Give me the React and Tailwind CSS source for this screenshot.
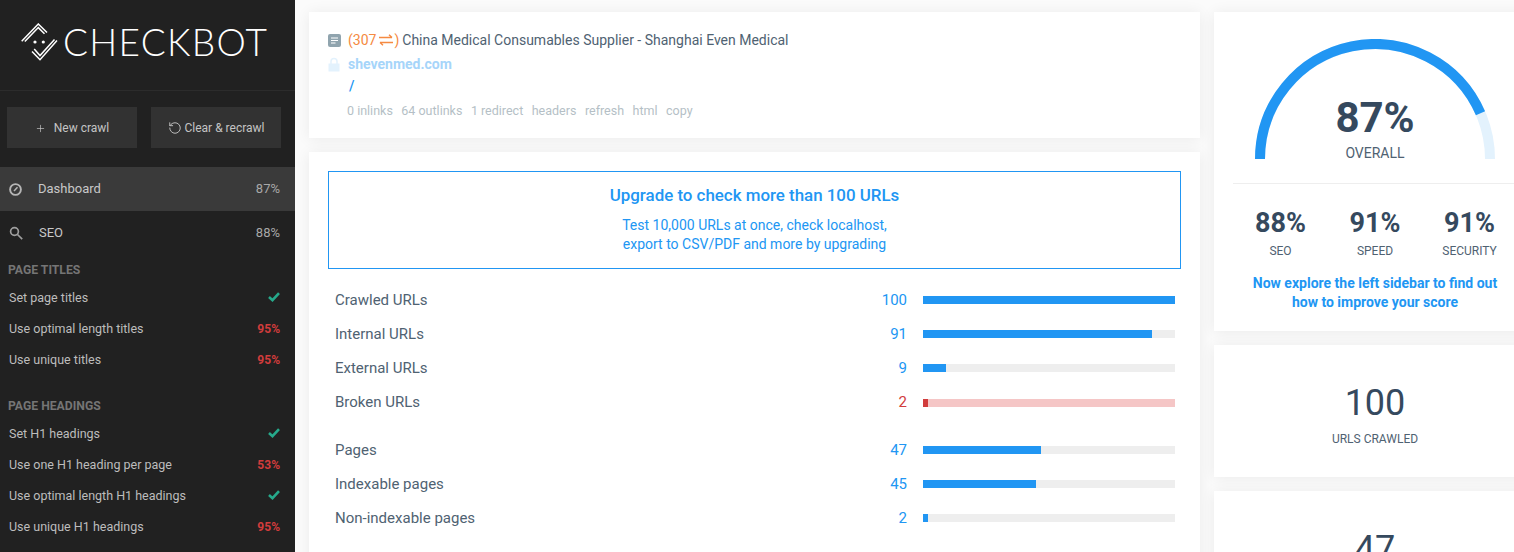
import { Plus, RotateCcw } from 'lucide-react'

const font = { fontFamily: 'Roboto, sans-serif' }

const titleItems = [
  ['Set page titles', null],
  ['Use optimal length titles', '95%'],
  ['Use unique titles', '95%'],
]

const headingItems = [
  ['Set H1 headings', null],
  ['Use one H1 heading per page', '53%'],
  ['Use optimal length H1 headings', null],
  ['Use unique H1 headings', '95%'],
]

const barsTop = [
  ['Crawled URLs', 100, 100],
  ['Internal URLs', 91, 91],
  ['External URLs', 9, 9],
  ['Broken URLs', 2, 2, true],
]

const barsBottom = [
  ['Pages', 47, 47],
  ['Indexable pages', 45, 45],
  ['Non-indexable pages', 2, 2],
]

function Logo() {
  return (
    <svg width="37" height="38" viewBox="0 0 37 38" fill="none" stroke="#fff" strokeWidth="1.5" className="shrink-0">
      <path d="M0.7 18.3 L17.3 1 L26 9.5" />
      <path d="M3.8 18.6 L17.3 4.6 L23.5 10.8" />
      <path d="M11 28.5 L19 36.7 L36 17.5" />
      <path d="M13.2 26 L19 32.6 L33.5 16.5" />
      <circle cx="14" cy="19" r="1.6" fill="#fff" stroke="none" />
      <circle cx="22.3" cy="19" r="1.6" fill="#fff" stroke="none" />
    </svg>
  )
}

function Check() {
  return (
    <svg width="12" height="10" viewBox="0 0 12 10" fill="none" stroke="#26a98b" strokeWidth="2.6" className="mb-[3px]">
      <path d="M1 5 L4.5 8.2 L11 1.2" />
    </svg>
  )
}

function SideItem({ label, value }) {
  return (
    <div className="flex items-center justify-between h-[31px] pl-[9px] pr-[15px] text-[12.5px] text-[#bdbdbd]">
      <span>{label}</span>
      {value ? <span className="mb-[2px] font-bold text-[12px] text-[#d13c3c]">{value}</span> : <Check />}
    </div>
  )
}

function Sidebar() {
  return (
    <aside className="w-[295px] shrink-0 bg-[#212121] h-[552px] overflow-hidden">
      <div className="h-[91px] border-b border-[#2c2c2c] flex items-start pl-[21px] pt-[23px] gap-[5px]">
        <Logo />
        <span className="text-[37px] leading-[38px] font-light text-white tracking-[1.3px]" style={{ fontFamily: 'Lato, sans-serif' }}>CHECKBOT</span>
      </div>
      <div className="flex gap-[14px] pl-[7px] pt-[16px]">
        <button className="w-[130px] h-[41px] pt-px bg-[#323232] text-[#c4c4c4] text-[12px] flex items-center justify-center gap-[8px]">
          <Plus size={11} strokeWidth={1.5} />
          New crawl
        </button>
        <button className="w-[130px] h-[41px] pt-px bg-[#323232] text-[#c4c4c4] text-[12px] flex items-center justify-center gap-[3px]">
          <RotateCcw size={14} strokeWidth={1.6} />
          Clear &amp; recrawl
        </button>
      </div>
      <div className="mt-[19px] h-[44px] bg-[#3a3a3a] flex items-center justify-between pl-[9px] pr-[15px] text-[13px] text-[#c8c8c8]">
        <span className="flex items-center gap-[16px]">
          <svg width="13" height="13" viewBox="0 0 13 13" fill="none" stroke="#b5b5b5" strokeWidth="1.9">
            <circle cx="6.5" cy="6.5" r="5.4" />
            <path d="M5 8 L8.5 4.2" strokeWidth="1.5" />
          </svg>
          Dashboard
        </span>
        <span className="text-[#a8a8a8]">87%</span>
      </div>
      <div className="h-[43px] flex items-center justify-between pl-[9px] pr-[15px] text-[13px] text-[#c8c8c8]">
        <span className="flex items-center gap-[16px]">
          <svg width="14" height="14" viewBox="0 0 14 14" fill="none" stroke="#9e9e9e" strokeWidth="1.7">
            <circle cx="5.5" cy="5.5" r="3.9" />
            <path d="M8.5 8.5 L13.2 13.2" />
          </svg>
          SEO
        </span>
        <span className="text-[#a8a8a8]">88%</span>
      </div>
      <div className="pl-[8px] text-[12.2px] font-bold text-[#757575] h-[15px] leading-[15px] mt-[9px]">PAGE TITLES</div>
      <div className="mt-[5px]">
        {titleItems.map(([label, value]) => (
          <SideItem key={label} label={label} value={value} />
        ))}
      </div>
      <div className="pl-[8px] text-[12.2px] font-bold text-[#757575] h-[15px] leading-[15px] mt-[23px]">PAGE HEADINGS</div>
      <div className="mt-[5px]">
        {headingItems.map(([label, value]) => (
          <SideItem key={label} label={label} value={value} />
        ))}
      </div>
    </aside>
  )
}

function Bar({ label, count, pct, danger }) {
  return (
    <div className="flex items-center h-[34.2px]">
      <span className="w-[500px] text-[15px] text-[#4f6272]">{label}</span>
      <span className={`w-[72px] text-right text-[15px] ${danger ? 'text-[#d13c3c]' : 'text-[#2196f3]'}`}>{count}</span>
      <div className={`ml-[16px] w-[252px] h-[8px] ${danger ? 'bg-[#f5c6c6]' : 'bg-[#eeeeee]'}`}>
        <div className={`h-full ${danger ? 'bg-[#d13c3c]' : 'bg-[#2196f3]'}`} style={{ width: `${pct}%` }} />
      </div>
    </div>
  )
}

function PageCard() {
  return (
    <div className="bg-white h-[126px] pt-[17px] pl-[19px] shadow-[0_1px_14px_rgba(0,0,0,0.07)]">
      <div className="flex items-center h-[22px] text-[14px] text-[#4f6272]">
        <svg width="13" height="13" viewBox="0 0 13 13" className="mr-[7px]">
          <rect width="13" height="13" rx="2" fill="#90a4ae" />
          <path d="M3 4 H10 M3 6.5 H10 M3 9 H7.5" stroke="#fff" strokeWidth="1.2" />
        </svg>
        <span className="text-[#f58a42] mr-[3px] flex items-center">
          (307
          <svg width="14" height="12" viewBox="0 0 14 12" fill="none" stroke="#f58a42" strokeWidth="1.4" className="ml-[3px] mr-[1px]">
            <path d="M0 3.5 H13 M10 0.8 L13 3.5" />
            <path d="M14 8.5 H1 M4 11.2 L1 8.5" />
          </svg>
          )
        </span>
        China Medical Consumables Supplier - Shanghai Even Medical
      </div>
      <div className="flex items-center h-[26px] text-[14px] font-bold text-[#a6d5fa]">
        <svg width="12" height="15" viewBox="0 0 12 15" className="mr-[8px]">
          <path d="M3 7 V4.5 a3 3 0 0 1 6 0 V7" fill="none" stroke="#e3f2fd" strokeWidth="1.5" />
          <rect x="0.5" y="6.5" width="11" height="8" fill="#e3f2fd" />
        </svg>
        shevenmed.com
      </div>
      <div className="pl-[21px] h-[19px] text-[14px] font-medium leading-[19px] text-[#2196f3]">/</div>
      <div className="pl-[19px] mt-[6px] flex gap-[8.5px] text-[12.5px] text-[#b5bfc6]">
        <span>0 inlinks</span>
        <span>64 outlinks</span>
        <span>1 redirect</span>
        <span>headers</span>
        <span>refresh</span>
        <span>html</span>
        <span>copy</span>
      </div>
    </div>
  )
}

function StatsCard() {
  return (
    <div className="mt-[14px] bg-white h-[420px] pt-[19px] px-[19px] shadow-[0_1px_14px_rgba(0,0,0,0.07)]">
      <div className="h-[98px] border border-[#2196f3] flex flex-col items-center text-[#2196f3]">
        <div className="mt-[12px] text-[16.9px] font-medium leading-[22px]">Upgrade to check more than 100 URLs</div>
        <div className="mt-[10px] text-[14px] leading-[19px] text-center">
          Test 10,000 URLs at once, check localhost,
          <br />
          export to CSV/PDF and more by upgrading
        </div>
      </div>
      <div className="pl-[7px] mt-[14px]">
        {barsTop.map(([label, count, pct, danger]) => (
          <Bar key={label} label={label} count={count} pct={pct} danger={danger} />
        ))}
        <div className="h-[13px]" />
        {barsBottom.map(([label, count, pct]) => (
          <Bar key={label} label={label} count={count} pct={pct} />
        ))}
      </div>
    </div>
  )
}

function Gauge() {
  return (
    <svg width="240" height="120" viewBox="0 0 240 120" fill="none" strokeWidth="10" className="block">
      <path d="M5 120 A115 115 0 0 1 235 120" stroke="#e3f2fd" />
      <path d="M5 120 A115 115 0 0 1 225.5 74.3" stroke="#2196f3" />
    </svg>
  )
}

function Score({ value, label }) {
  return (
    <div className="w-[94.5px] flex flex-col items-center">
      <span className="text-[27px] leading-[30px] font-bold text-[#35495e]">{value}</span>
      <span className="mt-[6px] text-[12px] leading-[14px] text-[#4f6272]">{label}</span>
    </div>
  )
}

function ScoreCard() {
  return (
    <div className="bg-white h-[319px] pt-[27px] shadow-[0_1px_14px_rgba(0,0,0,0.07)] relative">
      <div className="flex justify-center">
        <Gauge />
      </div>
      <div className="absolute left-0 right-0 top-[82px] text-center">
        <div className="text-[42px] leading-[48px] font-bold text-[#35495e]">87%</div>
        <div className="mt-[2px] text-[14px] leading-[18px] text-[#4f6272]">OVERALL</div>
      </div>
      <div className="ml-[19px] mt-[24px] border-t border-[#eeeeee]" />
      <div className="flex justify-center mt-[24px]">
        <Score value="88%" label="SEO" />
        <Score value="91%" label="SPEED" />
        <Score value="91%" label="SECURITY" />
      </div>
      <div className="mt-[16px] text-center text-[14px] leading-[19px] font-bold text-[#2196f3]">
        Now explore the left sidebar to find out
        <br />
        how to improve your score
      </div>
    </div>
  )
}

function CountCard({ value, label }) {
  return (
    <div className="mt-[14px] bg-white h-[132px] pt-[37px] text-center shadow-[0_1px_14px_rgba(0,0,0,0.07)]">
      <div className="text-[36px] leading-[42px] text-[#35495e]">{value}</div>
      <div className="mt-[8px] text-[12px] leading-[14px] text-[#4f6272]">{label}</div>
    </div>
  )
}

export default function App() {
  return (
    <div className="flex w-[1514px] h-[552px] overflow-hidden bg-[#fbfbfb]" style={font}>
      <Sidebar />
      <main className="flex pl-[14px] pt-[12px] gap-[14px]">
        <div className="w-[891px] shrink-0">
          <PageCard />
          <StatsCard />
        </div>
        <div className="w-[322px] shrink-0">
          <ScoreCard />
          <CountCard value="100" label="URLS CRAWLED" />
          <CountCard value="47" label="PAGES" />
        </div>
      </main>
    </div>
  )
}
